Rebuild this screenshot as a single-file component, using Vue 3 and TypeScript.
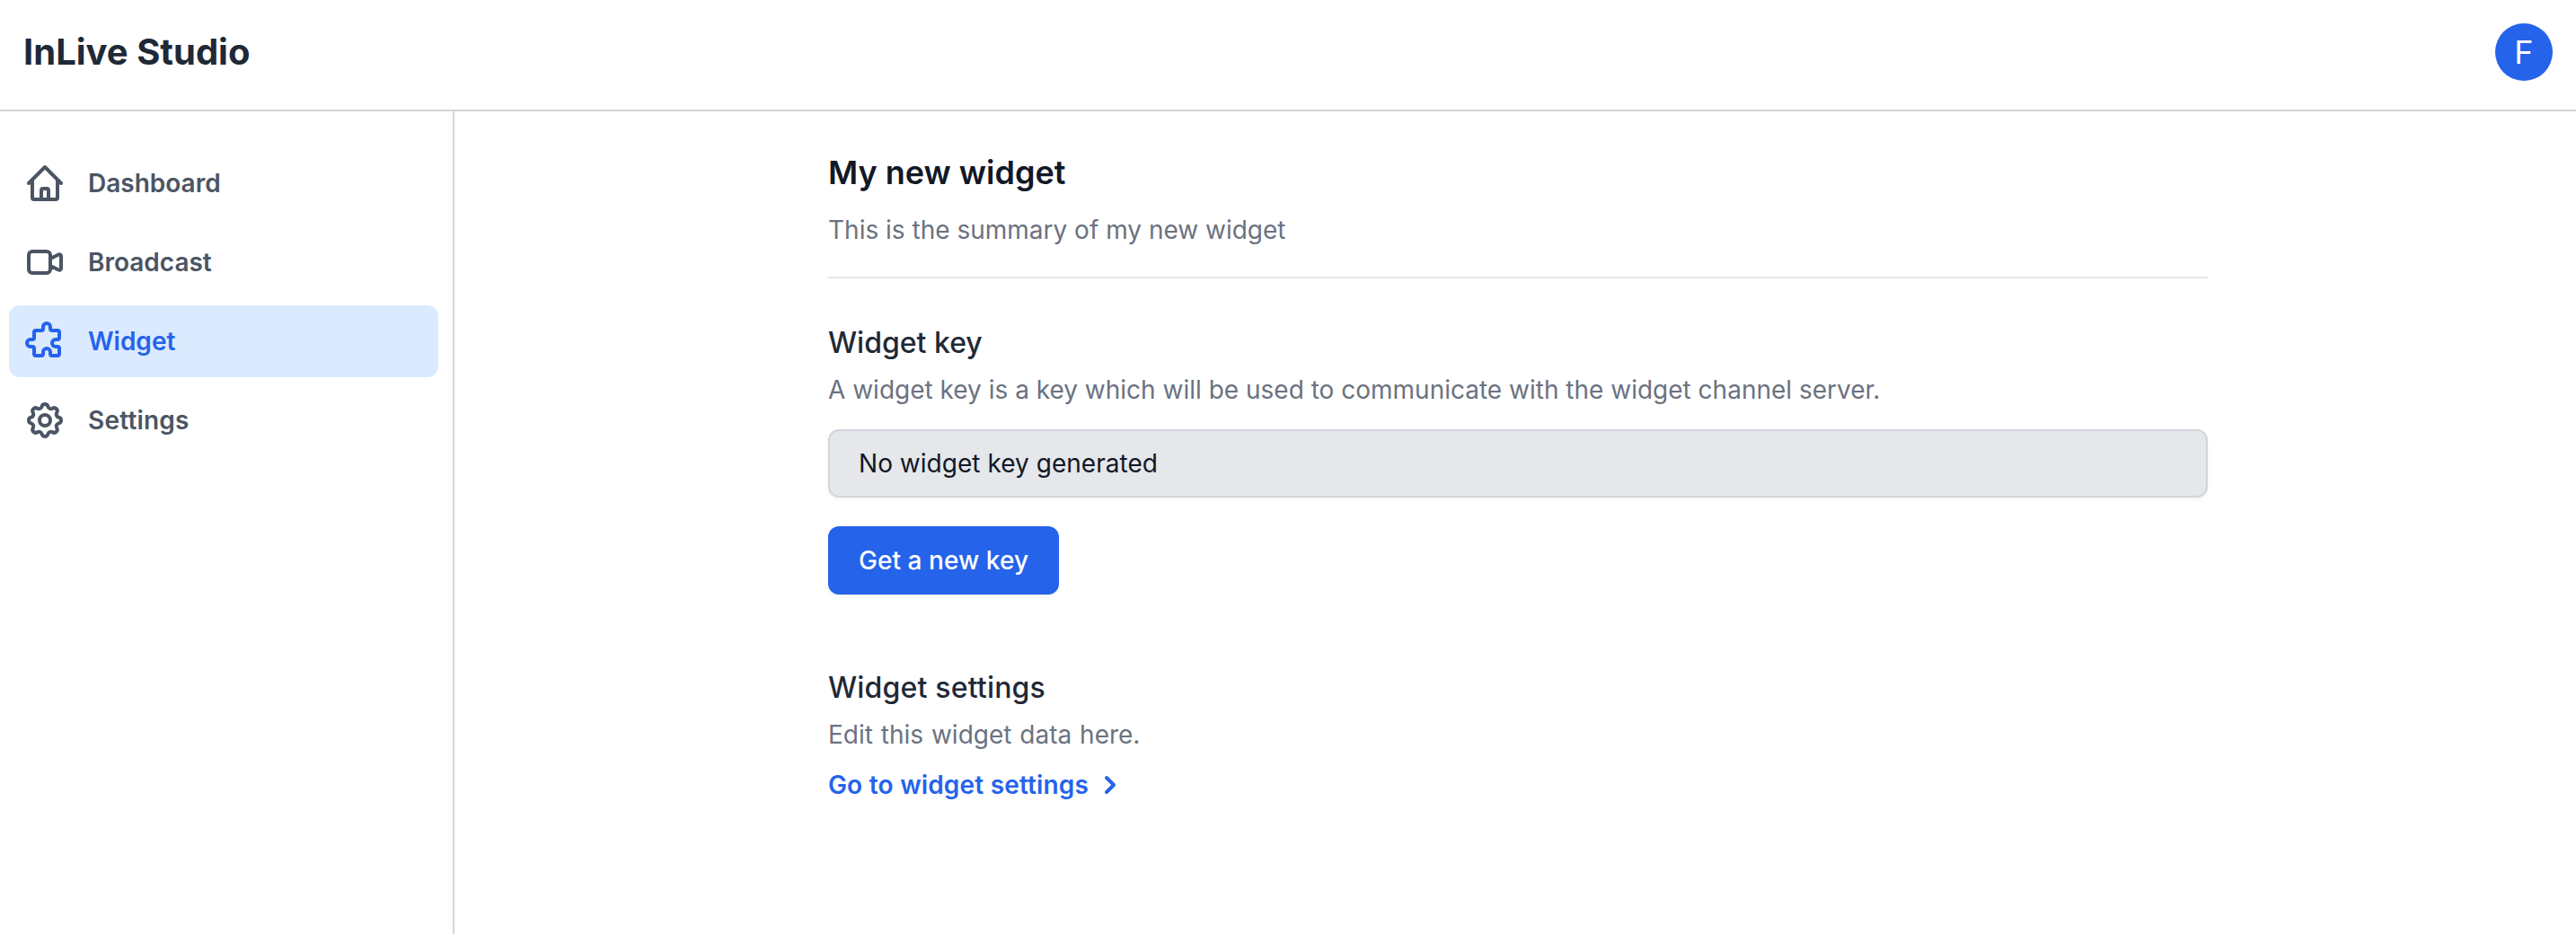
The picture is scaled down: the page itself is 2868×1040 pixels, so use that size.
<script setup lang="ts">
interface NavItem {
  label: string
  paths: string[]
  active?: boolean
}

const navItems: NavItem[] = [
  {
    label: 'Dashboard',
    paths: [
      'M3 12l2-2m0 0l7-7 7 7M5 10v10a1 1 0 001 1h3m10-11l2 2m-2-2v10a1 1 0 01-1 1h-3m-6 0a1 1 0 001-1v-4a1 1 0 011-1h2a1 1 0 011 1v4a1 1 0 001 1m-6 0h6',
    ],
  },
  {
    label: 'Broadcast',
    paths: [
      'M15 10l4.553-2.276A1 1 0 0121 8.618v6.764a1 1 0 01-1.447.894L15 14M5 18h8a2 2 0 002-2V8a2 2 0 00-2-2H5a2 2 0 00-2 2v8a2 2 0 002 2z',
    ],
  },
  {
    label: 'Widget',
    active: true,
    paths: [
      'M11 4a2 2 0 114 0v1a1 1 0 001 1h3a1 1 0 011 1v3a1 1 0 01-1 1h-1a2 2 0 100 4h1a1 1 0 011 1v3a1 1 0 01-1 1h-3a1 1 0 01-1-1v-1a2 2 0 10-4 0v1a1 1 0 01-1 1H7a1 1 0 01-1-1v-3a1 1 0 00-1-1H4a2 2 0 110-4h1a1 1 0 001-1V7a1 1 0 011-1h3a1 1 0 001-1V4z',
    ],
  },
  {
    label: 'Settings',
    paths: [
      'M10.325 4.317c.426-1.756 2.924-1.756 3.35 0a1.724 1.724 0 002.573 1.066c1.543-.94 3.31.826 2.37 2.37a1.724 1.724 0 001.065 2.572c1.756.426 1.756 2.924 0 3.35a1.724 1.724 0 00-1.066 2.573c.94 1.543-.826 3.31-2.37 2.37a1.724 1.724 0 00-2.572 1.065c-.426 1.756-2.924 1.756-3.35 0a1.724 1.724 0 00-2.573-1.066c-1.543.94-3.31-.826-2.37-2.37a1.724 1.724 0 00-1.065-2.572c-1.756-.426-1.756-2.924 0-3.35a1.724 1.724 0 001.066-2.573c-.94-1.543.826-3.31 2.37-2.37.996.608 2.296.07 2.572-1.065z',
      'M15 12a3 3 0 11-6 0 3 3 0 016 0z',
    ],
  },
]
</script>

<template>
  <div class="page">
    <header class="topbar">
      <div class="brand">InLive Studio</div>
      <div class="avatar">F</div>
    </header>
    <div class="body">
      <nav class="sidebar">
        <a v-for="item in navItems" :key="item.label" class="nav-item" :class="{ active: item.active }">
          <svg class="nav-icon" viewBox="0 0 24 24" fill="none" stroke="currentColor" stroke-width="2" stroke-linecap="round" stroke-linejoin="round">
            <path v-for="d in item.paths" :key="d" :d="d" />
          </svg>
          <span>{{ item.label }}</span>
        </a>
      </nav>
      <main class="content">
        <div class="intro">
          <h1>My new widget</h1>
          <p>This is the summary of my new widget</p>
        </div>
        <section class="key-section">
          <h2>Widget key</h2>
          <p class="hint">A widget key is a key which will be used to communicate with the widget channel server.</p>
          <div class="key-field">No widget key generated</div>
          <button class="primary" type="button">Get a new key</button>
        </section>
        <section class="settings-section">
          <h2>Widget settings</h2>
          <p class="hint">Edit this widget data here.</p>
          <a class="link">
            <span>Go to widget settings</span>
            <svg class="chevron" viewBox="0 0 20 20" fill="currentColor">
              <path fill-rule="evenodd" clip-rule="evenodd" d="M7.293 14.707a1 1 0 010-1.414L10.586 10 7.293 6.707a1 1 0 011.414-1.414l4 4a1 1 0 010 1.414l-4 4a1 1 0 01-1.414 0z" />
            </svg>
          </a>
        </section>
      </main>
    </div>
  </div>
</template>

<style>
body {
  margin: 0;
  background: #fff;
}
</style>

<style scoped>
.page {
  box-sizing: border-box;
  display: flex;
  flex-direction: column;
  height: 1040px;
  overflow: hidden;
  font-family: Inter, sans-serif;
  font-size: 28px;
  line-height: 40px;
  color: #111827;
}
.topbar {
  box-sizing: border-box;
  display: flex;
  align-items: flex-start;
  justify-content: space-between;
  height: 124px;
  flex: none;
  padding: 26px 26px 0;
  border-bottom: 2px solid #d1d5db;
}
.brand {
  font-size: 40px;
  font-weight: 700;
  line-height: 64px;
  color: #1f2937;
}
.avatar {
  width: 64px;
  height: 64px;
  border-radius: 50%;
  background: #2563eb;
  color: #fff;
  font-size: 36px;
  line-height: 64px;
  text-align: center;
}
.body {
  display: flex;
  flex: 1;
}
.sidebar {
  box-sizing: border-box;
  display: flex;
  flex-direction: column;
  gap: 8px;
  width: 506px;
  flex: none;
  padding: 40px 16px 0 10px;
  border-right: 2px solid #d1d5db;
}
.nav-item {
  display: flex;
  align-items: center;
  gap: 24px;
  height: 80px;
  padding: 0 16px;
  border-radius: 12px;
  font-weight: 600;
  color: #4b5563;
}
.nav-item:last-child {
  letter-spacing: 0.2px;
}
.nav-item.active {
  background: #dbeafe;
  color: #2563eb;
}
.nav-icon {
  width: 48px;
  height: 48px;
}
.content {
  width: 1536px;
  margin-left: 416px;
  padding-top: 40px;
}
h1,
h2,
p {
  margin: 0;
}
.intro {
  padding-bottom: 32px;
  border-bottom: 2px solid #e5e7eb;
}
h1 {
  margin-bottom: 16px;
  font-size: 36px;
  font-weight: 600;
  line-height: 56px;
}
h2 {
  margin-bottom: 8px;
  font-size: 32px;
  font-weight: 500;
  line-height: 48px;
  color: #1f2937;
}
.intro p,
.hint {
  color: #6b7280;
}
.key-section {
  margin-top: 48px;
}
.key-field {
  box-sizing: border-box;
  height: 76px;
  margin: 24px 0 32px;
  padding: 16px 32px;
  border: 2px solid #d1d5db;
  border-radius: 12px;
  background: #e5e7eb;
  box-shadow: 0 2px 4px rgba(0, 0, 0, 0.05);
  letter-spacing: 0.03px;
}
.primary {
  display: block;
  height: 76px;
  padding: 0 32px;
  border: 2px solid #2563eb;
  border-radius: 12px;
  background: #2563eb;
  box-shadow: 0 2px 4px rgba(0, 0, 0, 0.05);
  color: #fff;
  font: 500 28px/40px Inter, sans-serif;
  letter-spacing: 0.06px;
}
.settings-section {
  margin-top: 80px;
}
.settings-section h2 {
  letter-spacing: 0.18px;
}
.settings-section .hint {
  word-spacing: 1px;
}
.link {
  display: flex;
  align-items: center;
  gap: 4px;
  margin-top: 16px;
  font-weight: 600;
  letter-spacing: 0.13px;
  word-spacing: 0.3px;
  color: #2563eb;
}
.chevron {
  width: 40px;
  height: 40px;
}
</style>
